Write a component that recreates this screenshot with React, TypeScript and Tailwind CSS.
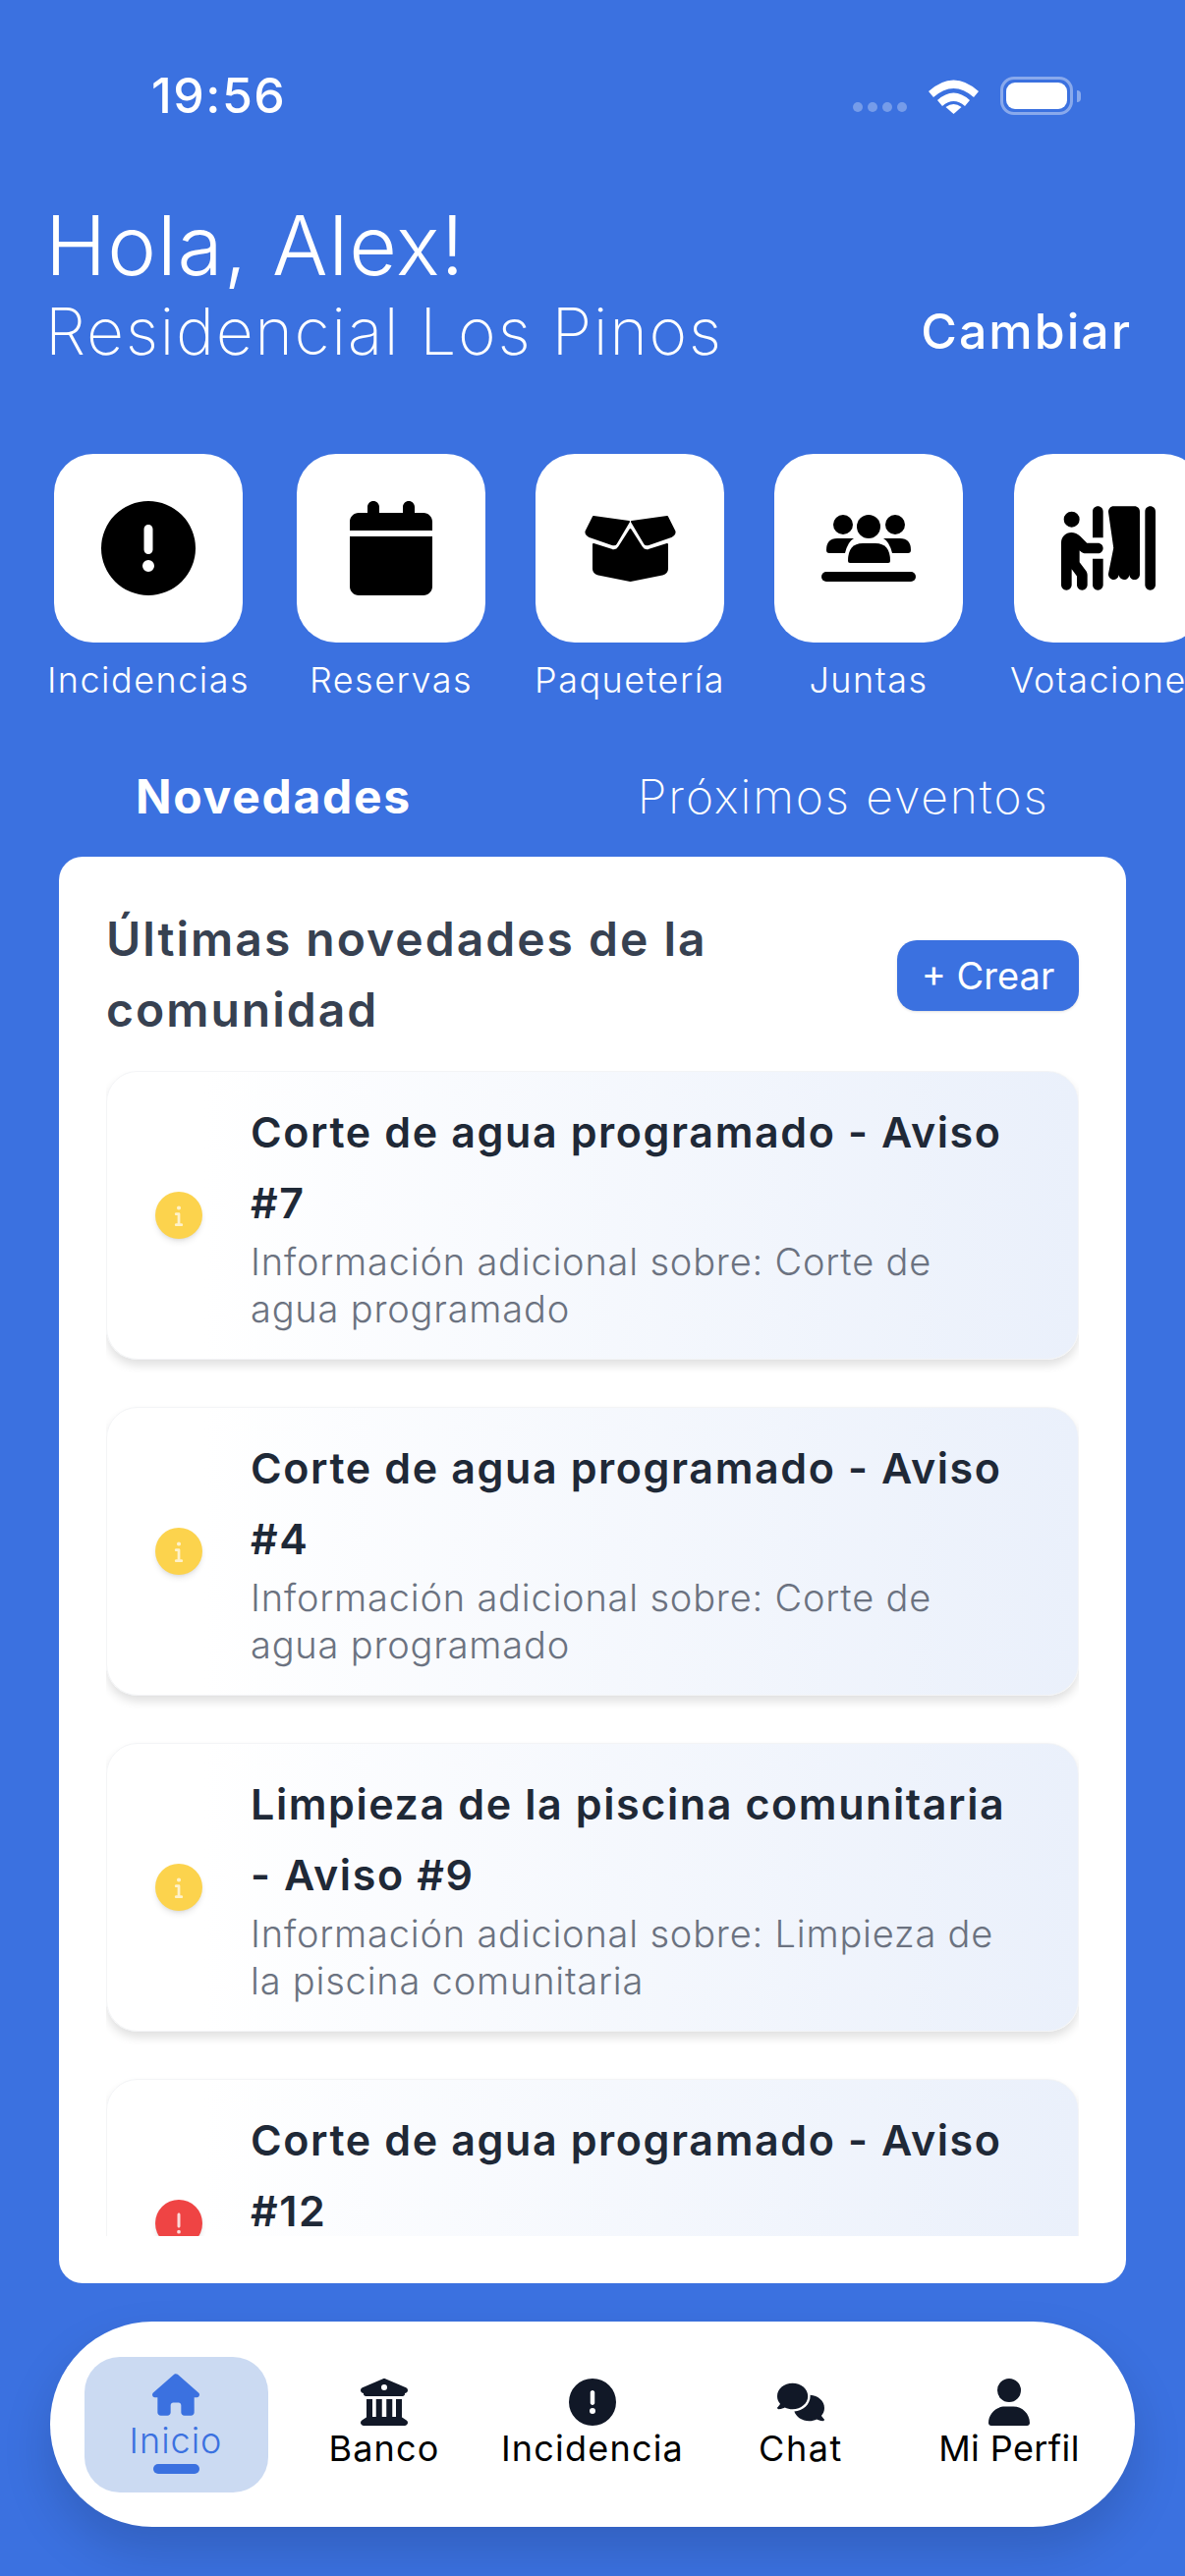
import React from 'react';
import {
  FaBuildingColumns,
  FaCalendar,
  FaCircleExclamation,
  FaComments,
  FaExclamation,
  FaHouse,
  FaInfo,
  FaPersonBooth,
  FaUser,
} from 'react-icons/fa6';

const BoxOpenIcon: React.FC = () => (
  <svg viewBox="0 0 93 67" width="93" height="67" fill="#000" stroke="#000" strokeWidth="2" strokeLinejoin="round">
    <path d="M9 1 L45 6 L32 28 Q31 30 28 29 L5 21 Q1 19 1.5 16 Z" />
    <path d="M84 1 L48 6 L61 28 Q62 30 65 29 L88 21 Q92 19 91.5 16 Z" />
    <path d="M9 29 L28 35 Q33 36 35 32 L46.5 14 L58 32 Q60 36 65 35 L84 29 L84 54 Q84 58 79 59.5 L46.5 66 L14 59.5 Q9 58 9 54 Z" />
  </svg>
);

const PeopleLineIcon: React.FC = () => (
  <svg viewBox="0 0 96 68" width="96" height="68" fill="#000">
    <circle cx="22" cy="10" r="10" />
    <circle cx="48" cy="12" r="12" />
    <circle cx="75" cy="10" r="10" />
    <path d="M5 36 Q5 24 16 24 H33 Q27 27 24 39 H8 Q5 39 5 36 Z" />
    <path d="M91 36 Q91 24 80 24 H63 Q69 27 72 39 H88 Q91 39 91 36 Z" />
    <path d="M27 47 Q27 29 42 29 H55 Q70 29 70 47 Q70 49 68 49 H29 Q27 49 27 47 Z" />
    <rect x="0" y="58" width="96" height="10" rx="5" />
  </svg>
);

const tiles = [
  { label: 'Incidencias', width: 'w-[206px]', icon: <FaCircleExclamation size={96} /> },
  { label: 'Reservas', width: 'w-[192px]', icon: <FaCalendar size={96} /> },
  { label: 'Paquetería', width: 'w-[198px]', icon: <BoxOpenIcon /> },
  { label: 'Juntas', width: 'w-[192px]', icon: <PeopleLineIcon /> },
  { label: 'Votaciones', width: 'w-[200px]', icon: <FaPersonBooth size={96} /> },
];

const notices = [
  { title: 'Corte de agua programado - Aviso #7', topic: 'Corte de agua programado', urgent: false },
  { title: 'Corte de agua programado - Aviso #4', topic: 'Corte de agua programado', urgent: false },
  { title: 'Limpieza de la piscina comunitaria - Aviso #9', topic: 'Limpieza de la piscina comunitaria', urgent: false },
  { title: 'Corte de agua programado - Aviso #12', topic: 'Corte de agua programado', urgent: true },
];

const navItems = [
  { label: 'Banco', tracking: 'tracking-[1.2px]', icon: <FaBuildingColumns size={48} /> },
  { label: 'Incidencia', tracking: 'tracking-[1.2px]', icon: <FaCircleExclamation size={48} /> },
  { label: 'Chat', tracking: 'tracking-[1.6px]', icon: <FaComments size={48} /> },
  { label: 'Mi Perfil', tracking: 'tracking-[0.4px]', icon: <FaUser size={48} /> },
];

const App: React.FC = () => {
  return (
    <div className="w-[1206px] h-[2622px] overflow-hidden flex flex-col bg-[#3b71e0] text-white font-['Inter',sans-serif]">
      {/* status bar */}
      <div className="flex items-center justify-between pt-[70px] pl-[154px] pr-[106px] h-[125px]">
        <span className="text-[50px] leading-[55px] font-medium tracking-[1.5px]">19:56</span>
        <div className="flex items-center">
          <div className="flex gap-[5px] mt-[22px] mr-[22px]">
            <span className="w-[10px] h-[10px] rounded-full bg-white/30" />
            <span className="w-[10px] h-[10px] rounded-full bg-white/30" />
            <span className="w-[10px] h-[10px] rounded-full bg-white/30" />
            <span className="w-[10px] h-[10px] rounded-full bg-white/30" />
          </div>
          <svg width="51" height="37" viewBox="0 0 51 37" fill="#fff" className="mr-[22px]">
            <path d="M0 14 Q25.5 -9 51 14 L46 20 Q25.5 2 5 20 Z" />
            <path d="M9 23 Q25.5 8 42 23 L37 29 Q25.5 19 14 29 Z" />
            <path d="M17.5 30 Q25.5 24 33.5 30 L25.5 37 Z" />
          </svg>
          <div className="w-[74px] h-[39px] rounded-[14px] border-[3px] border-white/40 p-[3px]">
            <div className="w-full h-full rounded-[9px] bg-white" />
          </div>
          <div className="w-[4px] h-[12px] ml-[4px] rounded-r-full bg-white/40" />
        </div>
      </div>

      {/* greeting */}
      <div className="pt-[83px] pl-[46px] pr-[54px]">
        <h1 className="text-[84px] leading-[84px] font-light tracking-[1px]">Hola, Alex!</h1>
        <div className="flex items-center justify-between mt-[5px]">
          <span className="text-[66px] leading-[80px] font-extralight tracking-[1.6px]">Residencial Los Pinos</span>
          <button className="text-[50px] leading-[60px] font-medium tracking-[2px]">Cambiar</button>
        </div>
      </div>

      {/* quick access */}
      <div className="flex gap-[48px] pl-[48px] mt-[85px] overflow-hidden">
        {tiles.map(tile => (
          <div key={tile.label} className={`${tile.width} shrink-0 flex flex-col items-center`}>
            <div className="w-[192px] h-[192px] rounded-[40px] bg-white text-black flex items-center justify-center">
              {tile.icon}
            </div>
            <span className="mt-[15px] text-[36px] leading-[46px] font-light tracking-[1.5px] whitespace-nowrap">{tile.label}</span>
          </div>
        ))}
      </div>

      {/* tabs */}
      <div className="flex mt-[61px] h-[70px] items-center">
        <span className="ml-[138px] text-[48px] font-bold leading-[60px] tracking-[1.7px]">Novedades</span>
        <span className="ml-[230px] text-[48px] font-extralight leading-[60px] tracking-[1.9px]">Próximos eventos</span>
      </div>

      {/* news card */}
      <div className="mt-[26px] mx-[60px] h-[1452px] rounded-[24px] bg-white pt-[48px] pb-[48px] px-[48px] flex flex-col">
        <div className="flex items-center justify-between">
          <h2 className="w-[660px] pb-[2px] text-[48px] leading-[72px] font-semibold tracking-[2px] text-[#374151]">
            Últimas novedades de la comunidad
          </h2>
          <button className="w-[185px] h-[72px] rounded-[20px] bg-[#3b71e0] text-white text-[38px] shadow-sm">+ Crear</button>
        </div>
        <div className="mt-[24px] flex-1 overflow-hidden flex flex-col gap-[48px] pb-[8px]">
          {notices.map(notice => (
            <div
              key={notice.title}
              className="shrink-0 h-[294px] flex items-center rounded-[32px] border border-gray-100 bg-gradient-to-r from-white from-10% to-[#eaf0fb] shadow-[0_6px_10px_rgba(0,0,0,0.12)]"
            >
              <div className="w-[146px] shrink-0 flex justify-center">
                {notice.urgent ? (
                  <div className="w-[48px] h-[48px] rounded-full bg-[#ef4444] flex items-center justify-center text-white/80 shadow-md">
                    <FaExclamation size={24} />
                  </div>
                ) : (
                  <div className="w-[48px] h-[48px] rounded-full bg-[#fcd34d] flex items-center justify-center text-white/70 shadow-md">
                    <FaInfo size={22} />
                  </div>
                )}
              </div>
              <div className="pr-[50px] pb-[2px]">
                <p className="text-[43px] leading-[72px] font-semibold tracking-[1.6px] text-[#1f2937]">{notice.title}</p>
                <p className="text-[38px] leading-[48px] font-light tracking-[0.8px] text-[#6b7280]">Información adicional sobre: {notice.topic}</p>
              </div>
            </div>
          ))}
        </div>
      </div>

      {/* bottom nav */}
      <div className="mt-[39px] mx-[51px] h-[209px] rounded-[104px] bg-white px-[22px] grid grid-cols-5 items-center shadow-[0_25px_50px_rgba(0,0,0,0.15)]">
        <div className="justify-self-center w-[187px] h-[138px] rounded-[36px] bg-[#cbdaf2] flex flex-col items-center pt-[17px] text-[#3b71e0]">
          <FaHouse size={48} className="h-[43px]" />
          <span className="text-[36px] leading-[44px] font-light tracking-[1px] mt-[3px]">Inicio</span>
          <span className="w-[47px] h-[10px] rounded-full bg-[#3b71e0] mt-[2px]" />
        </div>
        {navItems.map(item => (
          <div key={item.label} className="flex flex-col items-center text-[#111827]">
            {item.icon}
            <span className={`text-[36px] leading-[46px] font-normal ${item.tracking} text-black whitespace-nowrap`}>{item.label}</span>
          </div>
        ))}
      </div>
    </div>
  );
};

export default App;
